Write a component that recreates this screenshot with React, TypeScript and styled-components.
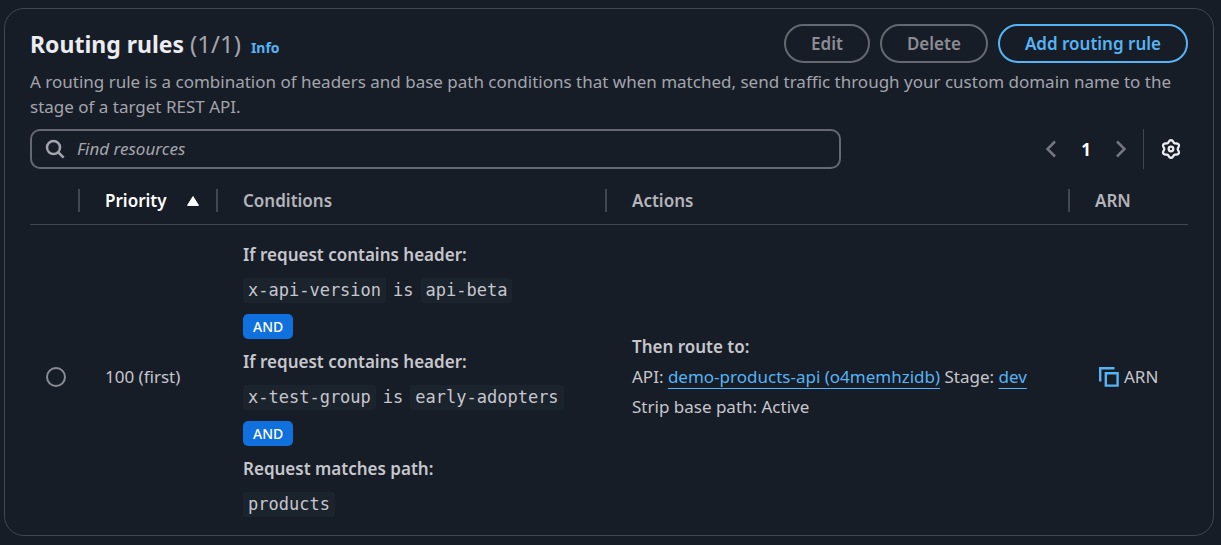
import React from 'react';
import styled, { createGlobalStyle } from 'styled-components';

const color = {
  bg: '#161d26',
  border: '#424650',
  control: '#656871',
  muted: '#a4a4ad',
  text: '#c6c6cd',
  heading: '#ebebf0',
  blue: '#56b3f4',
};

const GlobalStyle = createGlobalStyle`
  *, *::before, *::after { box-sizing: border-box; }
  body {
    margin: 0;
    background: ${color.bg};
    color: ${color.text};
    font: 17px/25px "Noto Sans", "Open Sans", sans-serif;
  }
  button, input { font: inherit; }
`;

const Panel = styled.section`
  margin: 8px 7px 8px 4px;
  padding: 15px 25px 7px;
  border: 1px solid ${color.border};
  border-radius: 20px;
`;

const Header = styled.header`
  display: flex;
  align-items: center;
  justify-content: space-between;
  height: 39px;
`;

const TitleGroup = styled.div`
  display: flex;
  align-items: baseline;
  gap: 10px;
`;

const Title = styled.h2`
  margin: 0;
  font-size: 23px;
  line-height: 32px;
  font-weight: 700;
  color: ${color.heading};
`;

const Count = styled.span`
  font-size: 24px;
  font-weight: 400;
  color: ${color.muted};
`;

const InfoLink = styled.a`
  font-size: 14px;
  font-weight: 700;
  color: ${color.blue};
  text-decoration: none;
`;

const Actions = styled.div`
  display: flex;
  gap: 10px;
`;

const Button = styled.button<{ $primary?: boolean }>`
  height: 39px;
  padding: 0 25px;
  border: 2px solid ${(p) => (p.$primary ? color.blue : color.control)};
  border-radius: 20px;
  background: transparent;
  color: ${(p) => (p.$primary ? color.blue : '#8c8c94')};
  font-weight: 600;
  white-space: nowrap;
`;

const Description = styled.p`
  margin: 6px 0 10px;
  color: ${color.muted};
`;

const Tools = styled.div`
  display: flex;
  align-items: center;
  justify-content: space-between;
`;

const SearchBox = styled.label`
  display: flex;
  align-items: center;
  gap: 12px;
  width: 70%;
  height: 40px;
  padding: 0 13px;
  border: 2px solid ${color.control};
  border-radius: 10px;
  color: ${color.muted};
`;

const SearchInput = styled.input`
  flex: 1;
  min-width: 0;
  padding: 0 0 2px;
  border: 0;
  outline: 0;
  background: transparent;
  color: ${color.text};
  &::placeholder {
    color: ${color.muted};
    font-style: italic;
    opacity: 1;
  }
`;

const Pager = styled.nav`
  display: flex;
  align-items: center;
  height: 40px;
`;

const IconButton = styled.button`
  display: flex;
  padding: 0;
  border: 0;
  background: transparent;
  color: #74767f;
`;

const PageButton = styled(IconButton)`
  justify-content: center;
  width: 50px;
  color: #fff;
  font-weight: 700;
`;

const Settings = styled.div`
  display: flex;
  align-items: center;
  height: 40px;
  margin-left: 12px;
  padding: 0 7px 0 17px;
  border-left: 1px solid ${color.border};
`;

const SettingsButton = styled(IconButton)`
  color: ${color.heading};
`;

const Table = styled.table`
  width: 100%;
  margin-top: 8px;
  border-collapse: separate;
  border-spacing: 0;
  table-layout: fixed;
`;

const Col = styled.col<{ $w?: string }>`
  width: ${(p) => p.$w ?? 'auto'};
`;

const HeadCell = styled.th`
  height: 48px;
  padding: 0;
  border-bottom: 1px solid ${color.border};
  text-align: left;
  font-weight: 600;
  color: #b4b4bb;
`;

const HeadLabel = styled.div<{ $sorted?: boolean }>`
  display: flex;
  align-items: center;
  gap: 20px;
  height: 23px;
  padding-left: 25px;
  border-left: 2px solid ${color.border};
  color: ${(p) => (p.$sorted ? '#fff' : 'inherit')};
`;

const Cell = styled.td<{ $indent?: string }>`
  padding: 0 0 0 ${(p) => p.$indent ?? '27px'};
  vertical-align: middle;
`;

const Radio = styled.input`
  display: block;
  appearance: none;
  width: 20px;
  height: 20px;
  margin: 0;
  border: 2px solid #8c8c94;
  border-radius: 50%;
`;

const Conditions = styled.div`
  display: flex;
  flex-direction: column;
  align-items: flex-start;
  gap: 10px;
  padding: 17px 0 11px;
`;

const Strong = styled.strong`
  font-weight: 600;
  line-height: 26px;
`;

const Expression = styled.div`
  display: flex;
  gap: 7px;
  font-family: "DejaVu Sans Mono", monospace;
`;

const Code = styled.code`
  padding: 0 5px;
  border-radius: 2px;
  background: #1b232d;
  font-family: inherit;
`;

const BadgeLine = styled.div`
  display: flex;
  align-items: center;
  height: 26px;
`;

const Badge = styled.span`
  padding: 0 10px;
  border-radius: 5px;
  background: #1070de;
  color: #fff;
  font-size: 14px;
  font-weight: 500;
`;

const Route = styled.div`
  line-height: 30px;
`;

const Link = styled.a`
  color: ${color.blue};
  text-decoration: underline;
  text-decoration-thickness: 1px;
  text-underline-offset: 5px;
`;

const Arn = styled.div`
  display: flex;
  align-items: center;
  gap: 5px;
`;

const CopyButton = styled(IconButton)`
  color: ${color.blue};
`;

const SearchIcon = () => (
  <svg width="20" height="20" viewBox="0 0 20 20" fill="none" stroke="currentColor" strokeWidth="2.5" aria-hidden="true">
    <circle cx="8.5" cy="8.5" r="6.5" />
    <path d="M13 13 18.6 18.6" />
  </svg>
);

const Chevron = ({ right }: { right?: boolean }) => (
  <svg width="20" height="20" viewBox="0 0 20 20" fill="none" stroke="currentColor" strokeWidth="2.5" aria-hidden="true">
    <path d={right ? 'M6 2.5 13.5 10 6 17.5' : 'M14 2.5 6.5 10 14 17.5'} />
  </svg>
);

// Six rounded teeth around the hub: the radius swings between tooth tip and valley.
const gearOutline = Array.from({ length: 72 }, (_, i) => {
  const angle = (i * Math.PI) / 36;
  const radius = 7.8 + 1.1 * Math.cos(6 * angle);
  const x = 10 + radius * Math.sin(angle);
  const y = 10 - radius * Math.cos(angle);
  return `${x.toFixed(2)},${y.toFixed(2)}`;
}).join(' ');

const GearIcon = () => (
  <svg width="20" height="20" viewBox="0 0 20 20" fill="none" stroke="currentColor" strokeWidth="2.3" strokeLinejoin="round" aria-hidden="true">
    <polygon points={gearOutline} />
    <circle cx="10" cy="10" r="2.3" />
  </svg>
);

const SortIcon = () => (
  <svg width="12" height="10" viewBox="0 0 12 10" fill="currentColor" stroke="currentColor" strokeLinejoin="round" aria-hidden="true">
    <path d="M6 .6 11.5 9.4H.5z" />
  </svg>
);

const CopyIcon = () => (
  <svg width="20" height="20" viewBox="0 0 20 20" fill="none" stroke="currentColor" strokeWidth="2.4" aria-hidden="true">
    <path d="M1.2 14.500V1.200H15.500" />
    <path d="M6.800 6.200h11.800v12.400H6.800z" />
  </svg>
);

const headers = ['Conditions', 'Actions', 'ARN'];

const rules: { label: string; parts: string[] }[] = [
  { label: 'If request contains header:', parts: ['x-api-version', 'api-beta'] },
  { label: 'If request contains header:', parts: ['x-test-group', 'early-adopters'] },
  { label: 'Request matches path:', parts: ['products'] },
];

export default function App() {
  return (
    <>
      <GlobalStyle />
      <Panel>
        <Header>
          <TitleGroup>
            <Title>
              Routing rules <Count>(1/1)</Count>
            </Title>
            <InfoLink href="#info">Info</InfoLink>
          </TitleGroup>
          <Actions>
            <Button disabled>Edit</Button>
            <Button disabled>Delete</Button>
            <Button $primary>Add routing rule</Button>
          </Actions>
        </Header>
        <Description>
          A routing rule is a combination of headers and base path conditions that when matched, send traffic through
          your custom domain name to the stage of a target REST API.
        </Description>
        <Tools>
          <SearchBox>
            <SearchIcon />
            <SearchInput type="text" placeholder="Find resources" aria-label="Find resources" />
          </SearchBox>
          <Pager aria-label="Pagination">
            <IconButton disabled aria-label="Previous page">
              <Chevron />
            </IconButton>
            <PageButton aria-current="page">1</PageButton>
            <IconButton disabled aria-label="Next page">
              <Chevron right />
            </IconButton>
            <Settings>
              <SettingsButton aria-label="Preferences">
                <GearIcon />
              </SettingsButton>
            </Settings>
          </Pager>
        </Tools>
        <Table>
          <colgroup>
            <Col $w="48px" />
            <Col $w="138px" />
            <Col $w="389px" />
            <Col />
            <Col $w="120px" />
          </colgroup>
          <thead>
            <tr>
              <HeadCell aria-label="Selection" />
              <HeadCell scope="col" aria-sort="ascending">
                <HeadLabel $sorted>
                  Priority <SortIcon />
                </HeadLabel>
              </HeadCell>
              {headers.map((h) => (
                <HeadCell key={h} scope="col">
                  <HeadLabel>{h}</HeadLabel>
                </HeadCell>
              ))}
            </tr>
          </thead>
          <tbody>
            <tr>
              <Cell $indent="16px">
                <Radio type="radio" name="rule" aria-label="Select rule 100" />
              </Cell>
              <Cell>100 (first)</Cell>
              <Cell>
                <Conditions>
                  {rules.map((rule, i) => (
                    <React.Fragment key={i}>
                      {i > 0 && (
                        <BadgeLine>
                          <Badge>AND</Badge>
                        </BadgeLine>
                      )}
                      <Strong>{rule.label}</Strong>
                      <Expression>
                        {rule.parts.map((part, j) => (
                          <React.Fragment key={part}>
                            {j > 0 && <span>is</span>}
                            <Code>{part}</Code>
                          </React.Fragment>
                        ))}
                      </Expression>
                    </React.Fragment>
                  ))}
                </Conditions>
              </Cell>
              <Cell>
                <Route>
                  <Strong>Then route to:</Strong>
                  <div>
                    API: <Link href="#api">demo-products-api (o4memhzidb)</Link> Stage: <Link href="#dev">dev</Link>
                  </div>
                  <div>Strip base path: Active</div>
                </Route>
              </Cell>
              <Cell $indent="31px">
                <Arn>
                  <CopyButton aria-label="Copy ARN">
                    <CopyIcon />
                  </CopyButton>
                  ARN
                </Arn>
              </Cell>
            </tr>
          </tbody>
        </Table>
      </Panel>
    </>
  );
}
